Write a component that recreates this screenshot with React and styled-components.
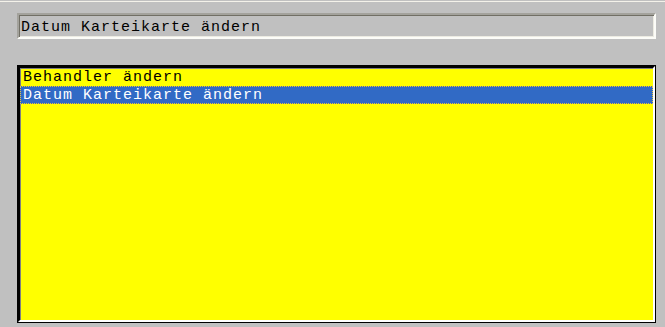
import React from "react";
import styled, { createGlobalStyle } from "styled-components";

const Global = createGlobalStyle`
  html, body { margin: 0; padding: 0; background: #c0c0c0; }
  body { width: 665px; height: 327px; overflow: hidden; }
`;

const Page = styled.div`
  width: 665px;
  height: 327px;
  box-sizing: border-box;
  background: #c0c0c0;
  padding-top: 1px;
  display: flex;
  flex-direction: column;
  font-family: "Liberation Mono", "Courier New", monospace;
  font-size: 15px;
  letter-spacing: 1px;
`;

const TopRule = styled.div`
  height: 1px;
  background: #f4f2ea;
`;

const Field = styled.div`
  margin: 11px 0 0 17px;
  width: 639px;
  height: 26px;
  box-sizing: border-box;
  border-style: solid;
  border-width: 2px;
  border-color: #a3a29c #fcfcf8 #fcfcf8 #a3a29c;
  box-shadow: inset 1px 1px 0 #716f65, inset -1px -1px 0 #ecebe2;
  padding: 4px 0 0 2px;
  line-height: 18px;
  color: #000;
  white-space: pre;
`;

const ListFrame = styled.div`
  margin: 26px 0 0 17px;
  width: 639px;
  height: 258px;
  box-sizing: border-box;
  border: 1px solid #000;
  display: flex;
`;

const ListInner = styled.div`
  flex: 1;
  border-style: solid;
  border-width: 2px;
  border-color: #000 #fff #fff #000;
  box-shadow: inset 1px 1px 0 #808080;
  background: #ffff00;
  display: flex;
  flex-direction: column;
`;

const Row = styled.div`
  height: 18px;
  line-height: 19px;
  padding-left: 3px;
  white-space: pre;
  color: ${(p) => (p.$selected ? "#fff" : "#000")};
  background: ${(p) => (p.$selected ? "#316ac5" : "transparent")};
  outline: ${(p) => (p.$selected ? "1px dotted #e8c23a" : "none")};
  outline-offset: -1px;
`;

const items = ["Behandler ändern", "Datum Karteikarte ändern"];

export default function App() {
  return (
    <Page>
      <Global />
      <TopRule />
      <Field>Datum Karteikarte ändern</Field>
      <ListFrame>
        <ListInner>
          {items.map((t, i) => (
            <Row key={t} $selected={i === 1}>
              {t}
            </Row>
          ))}
        </ListInner>
      </ListFrame>
    </Page>
  );
}
